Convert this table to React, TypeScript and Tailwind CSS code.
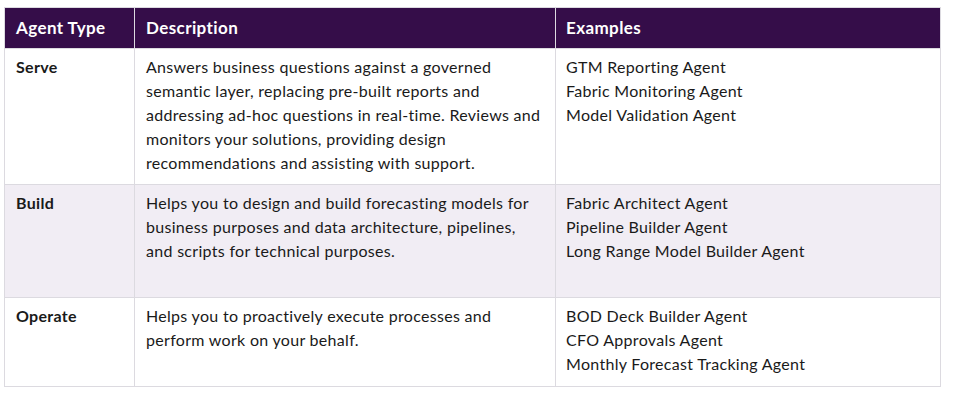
import React from "react";

const rows = [
  {
    type: "Serve",
    desc: [
      "Answers business questions against a governed",
      "semantic layer, replacing pre-built reports and",
      "addressing ad-hoc questions in real-time. Reviews and",
      "monitors your solutions, providing design",
      "recommendations and assisting with support.",
    ],
    ex: ["GTM Reporting Agent", "Fabric Monitoring Agent", "Model Validation Agent"],
    bg: "bg-white",
    h: "h-[136px]",
  },
  {
    type: "Build",
    desc: [
      "Helps you to design and build forecasting models for",
      "business purposes and data architecture, pipelines,",
      "and scripts for technical purposes.",
    ],
    ex: ["Fabric Architect Agent", "Pipeline Builder Agent", "Long Range Model Builder Agent"],
    bg: "bg-[#f1edf4]",
    h: "h-[113px]",
  },
  {
    type: "Operate",
    desc: [
      "Helps you to proactively execute processes and",
      "perform work on your behalf.",
    ],
    ex: ["BOD Deck Builder Agent", "CFO Approvals Agent", "Monthly Forecast Tracking Agent"],
    bg: "bg-white",
    h: "h-[89px]",
  },
];

export default function App() {
  return (
    <div className="w-[963px] h-[402px] bg-white pl-[4px] pt-[7px] font-['Lato','Open_Sans',sans-serif] text-[16px] tracking-[0.3px] leading-[24px] text-[#1a1a1a]">
      <table className="border-collapse table-fixed w-[936px]">
        <colgroup>
          <col className="w-[130px]" />
          <col className="w-[421px]" />
          <col className="w-[385px]" />
        </colgroup>
        <thead>
          <tr className="h-[41px] bg-[#350d49] text-white text-[17px] tracking-[0.4px] font-bold">
            <th className="text-left align-middle pl-[11px] pb-[1px] border border-[#dcdae0]">Agent Type</th>
            <th className="text-left align-middle pl-[11px] pb-[1px] border border-[#dcdae0]">Description</th>
            <th className="text-left align-middle pl-[10px] pb-[1px] border border-[#dcdae0]">Examples</th>
          </tr>
        </thead>
        <tbody>
          {rows.map((r) => (
            <tr key={r.type} className={`${r.bg} ${r.h}`}>
              <td className="align-top pl-[11px] pt-[6px] font-bold border border-[#dcdae0]">{r.type}</td>
              <td className="align-top pl-[11px] pt-[6px] border border-[#dcdae0] whitespace-nowrap">
                {r.desc.map((l) => (
                  <div key={l}>{l}</div>
                ))}
              </td>
              <td className="align-top pl-[10px] pt-[6px] border border-[#dcdae0]">
                {r.ex.map((e) => (
                  <div key={e}>{e}</div>
                ))}
              </td>
            </tr>
          ))}
        </tbody>
      </table>
    </div>
  );
}
